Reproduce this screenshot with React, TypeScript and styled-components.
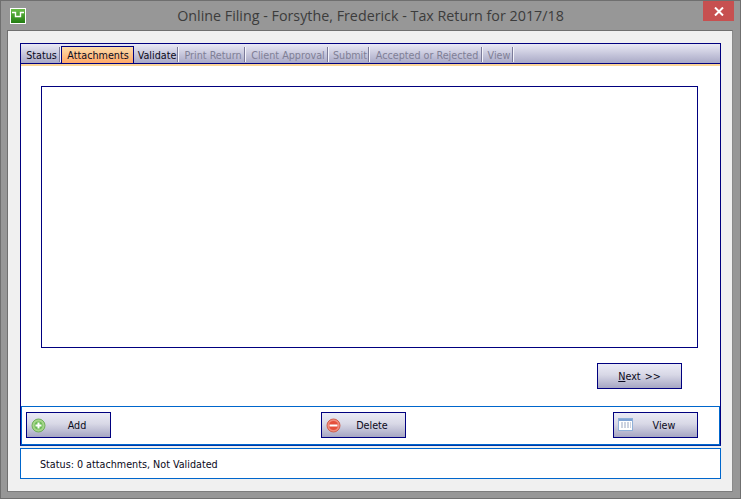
import styled, { createGlobalStyle } from 'styled-components';

const GlobalStyle = createGlobalStyle`
    html, body {
        margin: 0;
        padding: 0;
        background: #979797;
    }
`;

const Window = styled.div`
    width: 741px;
    height: 499px;
    box-sizing: border-box;
    display: flex;
    flex-direction: column;
    background: #979797;
    border: 1px solid #6f6f6f;
    font-family: "DejaVu Sans", "Liberation Sans", sans-serif;
    font-stretch: condensed;
    overflow: hidden;
`;

const TitleBar = styled.div`
    height: 29px;
    flex: none;
    display: flex;
    align-items: center;
    position: relative;
    padding-left: 9px;
`;

const Title = styled.div`
    flex: 1;
    padding-right: 25px;
    text-align: center;
    font-family: "Open Sans", sans-serif;
    font-stretch: normal;
    font-size: 14.3px;
    color: #3c3c3c;
`;

const CloseButton = styled.div`
    position: absolute;
    top: 0;
    right: 6px;
    width: 31px;
    height: 20px;
    background: #c75050;
    display: flex;
    align-items: center;
    justify-content: center;
`;

const Client = styled.div`
    flex: 1;
    margin: 0 7px 7px 6px;
    padding: 12px 11px 12px 12px;
    background: #f0f0f0;
    border: 1px solid #6f6f6f;
    border-right-color: #8a8a8a;
    border-bottom-color: #7c7c7c;
    display: flex;
    flex-direction: column;
    gap: 2px;
`;

const MainPanel = styled.div`
    height: 403px;
    flex: none;
    box-sizing: border-box;
    background: #fff;
    border: 1px solid #00007f;
    border-bottom-width: 2px;
    border-bottom-color: #0038a8;
    display: flex;
    flex-direction: column;
`;

const TabBar = styled.div`
    height: 19px;
    flex: none;
    display: flex;
    align-items: flex-end;
    background: linear-gradient(#e9e9f5, #a9a9c6);
    border-bottom: 1px solid #00007f;
    box-shadow: 0 2px 0 #fbd596;
    position: relative;
`;

const Tab = styled.div<{ $active?: boolean; $disabled?: boolean; $w: number }>`
    width: ${p => p.$w}px;
    height: ${p => (p.$active ? 17 : 15)}px;
    margin-bottom: ${p => (p.$active ? 0 : 1)}px;
    box-sizing: border-box;
    flex: none;
    display: flex;
    align-items: center;
    justify-content: center;
    padding: ${p => (p.$active ? '1px 0 0 1px' : '2px 0 0 2px')};
    font-size: 10.7px;
    color: ${p => (p.$disabled ? '#7f7f96' : '#0a0a20')};
    ${p => p.$active
        ? `background: linear-gradient(#fcdcaa, #ffa868);
           border: 1px solid #00007f;
           border-bottom: none;`
        : `border-right: 1px solid #f4f4fa;
           box-shadow: inset -1px 0 0 #7b7b9a;`}
`;

const TabBody = styled.div`
    flex: 1;
    display: flex;
    flex-direction: column;
    padding: 22px 22px 0 20px;
`;

const ListArea = styled.div`
    height: 262px;
    flex: none;
    box-sizing: border-box;
    border: 1px solid #00007f;
    background: #fff;
`;

const NextRow = styled.div`
    margin-top: 15px;
    padding-right: 16px;
    display: flex;
    justify-content: flex-end;
`;

const Button = styled.div<{ $icon?: boolean }>`
    width: 85px;
    height: 26px;
    box-sizing: border-box;
    position: relative;
    display: flex;
    align-items: center;
    justify-content: center;
    padding-left: ${p => (p.$icon ? 17 : 0)}px;
    border: 1px solid #00007f;
    background: linear-gradient(#ebebf6, #d8d8e6 45%, #a6a6c3);
    font-size: 10.7px;
    color: #0a0a20;
`;

const NextLabel = styled.span`
    word-spacing: 1px;
`;

const IconSlot = styled.span`
    position: absolute;
    left: 4px;
    top: 5px;
    width: 16px;
    height: 16px;
    display: flex;
`;

const Toolbar = styled.div`
    margin-top: 17px;
    height: 39px;
    flex: none;
    box-sizing: border-box;
    border: 1px solid #0066cc;
    padding: 5px 0 0 4px;
    display: grid;
    grid-template-columns: 295px 292px 85px;
    align-items: start;
`;

const StatusBox = styled.div`
    height: 31px;
    flex: none;
    box-sizing: border-box;
    background: #fff;
    border: 1px solid #0066cc;
    display: flex;
    align-items: center;
    padding: 1px 0 0 19px;
    font-size: 10.7px;
    color: #0a0a20;
`;

const AppIcon = () => (
    <svg width="16" height="16" viewBox="0 0 16 16">
        <defs>
            <linearGradient id="appGreen" x1="0" y1="0" x2="0" y2="1">
                <stop offset="0" stopColor="#6cc04a" />
                <stop offset="1" stopColor="#1f7a10" />
            </linearGradient>
        </defs>
        <rect x="0.5" y="0.5" width="15" height="15" fill="url(#appGreen)" stroke="#fff" />
        <path d="M2 4.5h3.5v4h5v-4H14" fill="none" stroke="#fff" strokeWidth="1.4" />
    </svg>
);

const CloseIcon = () => (
    <svg width="10" height="9" viewBox="0 0 10 9">
        <path d="M1 0.5l8 8M9 0.5l-8 8" stroke="#fff" strokeWidth="2" />
    </svg>
);

const AddIcon = () => (
    <svg width="16" height="16" viewBox="0 0 16 16">
        <circle cx="7.5" cy="7.5" r="6.5" fill="#a6d68a" stroke="#6fae5a" />
        <circle cx="7.5" cy="7.5" r="4" fill="#6dbb58" />
        <path d="M7.5 4.5v6M4.5 7.5h6" stroke="#fff" strokeWidth="2" />
    </svg>
);

const DeleteIcon = () => (
    <svg width="16" height="16" viewBox="0 0 16 16">
        <circle cx="7.5" cy="7.5" r="6.5" fill="#f08c7c" stroke="#d0604e" />
        <circle cx="7.5" cy="7.5" r="4.5" fill="#e5503c" />
        <path d="M3.5 7.5h8" stroke="#fff" strokeWidth="2" />
    </svg>
);

const ViewIcon = () => (
    <svg width="16" height="16" viewBox="0 0 16 16">
        <rect x="0.5" y="0.5" width="14" height="12" fill="#fff" stroke="#8fb0d8" />
        <rect x="1" y="1" width="13" height="2" fill="#7fa3d4" />
        <path d="M3 5h2M6 5h2M9 5h2M12 5h1M3 7h2M6 7h2M9 7h2M12 7h1M3 9h2M6 9h2M9 9h2M12 9h1" stroke="#9aa6c0" />
    </svg>
);

const tabs = [
    { label: 'Status', w: 40 },
    { label: 'Attachments', w: 73, active: true },
    { label: 'Validate', w: 45 },
    { label: 'Print Return', w: 67, disabled: true },
    { label: 'Client Approval', w: 83, disabled: true },
    { label: 'Submit', w: 41, disabled: true },
    { label: 'Accepted or Rejected', w: 113, disabled: true },
    { label: 'View', w: 31, disabled: true },
];

function App() {
    return (
        <>
            <GlobalStyle />
            <Window>
                <TitleBar>
                    <AppIcon />
                    <Title>Online Filing - Forsythe, Frederick - Tax Return for 2017/18</Title>
                    <CloseButton><CloseIcon /></CloseButton>
                </TitleBar>
                <Client>
                    <MainPanel>
                        <TabBar>
                            {tabs.map(t => (
                                <Tab key={t.label} $w={t.w} $active={t.active} $disabled={t.disabled}>{t.label}</Tab>
                            ))}
                        </TabBar>
                        <TabBody>
                            <ListArea />
                            <NextRow>
                                <Button><NextLabel><u>N</u>ext &gt;&gt;</NextLabel></Button>
                            </NextRow>
                        </TabBody>
                        <Toolbar>
                            <Button $icon><IconSlot><AddIcon /></IconSlot>Add</Button>
                            <Button $icon><IconSlot><DeleteIcon /></IconSlot>Delete</Button>
                            <Button $icon><IconSlot><ViewIcon /></IconSlot>View</Button>
                        </Toolbar>
                    </MainPanel>
                    <StatusBox>Status: 0 attachments, Not Validated</StatusBox>
                </Client>
            </Window>
        </>
    );
}

export default App;
